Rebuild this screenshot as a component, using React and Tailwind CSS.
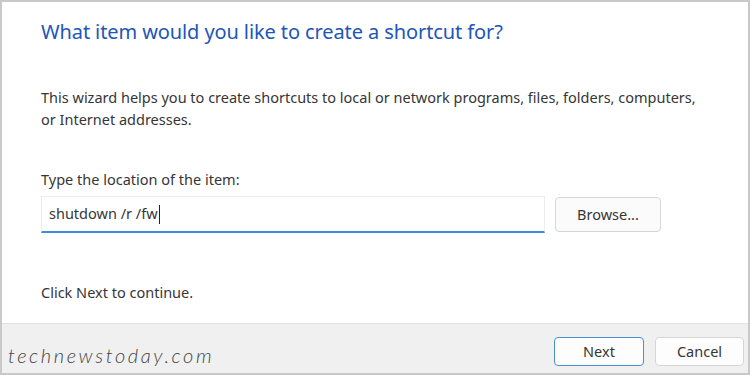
export default function App() {
  return (
    <div className="w-[750px] h-[375px] overflow-hidden bg-white border-t-[2px] border-l-[2px] border-r-[2px] border-b-[2px] border-[#c9c9c9] flex flex-col" style={{ fontFamily: '"Noto Sans", "Open Sans", sans-serif' }}>
      <div className="flex-1 flex flex-col pl-[39px] pr-[20px]">
        <div className="mt-[16px] text-[20px] leading-[28px] text-[#2156b8] tracking-[-0.1px]">What item would you like to create a shortcut for?</div>
        <div className="mt-[40px] text-[14.5px] leading-[22px] text-[#363636]">
          This wizard helps you to create shortcuts to local or network programs, files, folders, computers,<br />or Internet addresses.
        </div>
        <div className="mt-[38px] text-[14.5px] leading-[22px] text-[#363636]">Type the location of the item:</div>
        <div className="mt-[6px] flex items-start gap-[10px]">
          <div className="w-[504px] h-[37px] bg-white border border-[#ececec] border-b-[2px] border-b-[#3f8bd8] flex items-center pl-[7px] text-[14.5px] text-[#363636]">
            shutdown /r /fw<span className="inline-block w-[1px] h-[19px] bg-[#222] ml-[1px]"></span>
          </div>
          <div className="w-[106px] h-[35px] mt-[1px] bg-[#fbfbfb] border border-[#d6d6d6] rounded-[4px] flex items-center justify-center text-[14.5px] text-[#363636]">Browse...</div>
        </div>
        <div className="mt-[48px] text-[14.5px] leading-[22px] text-[#363636]">Click Next to continue.</div>
      </div>
      <div className="h-[50px] bg-[#f0f0f0] border-t border-[#e2e2e2] flex items-center justify-between pl-[6px] pr-[4px]">
        <div className="text-[20px] italic font-light tracking-[2.6px] text-[#444444] mt-[12px]" style={{ fontFamily: 'Lato, "Open Sans", sans-serif' }}>technewstoday.com</div>
        <div className="flex gap-[11px] mt-[6px]">
          <div className="w-[90px] h-[29px] bg-[#fdfdfd] border border-[#4a90d9] rounded-[4px] flex items-center justify-center text-[14.5px] text-[#363636]">Next</div>
          <div className="w-[89px] h-[29px] bg-[#fdfdfd] border border-[#d6d6d6] rounded-[4px] flex items-center justify-center text-[14.5px] text-[#363636]">Cancel</div>
        </div>
      </div>
    </div>
  );
}
